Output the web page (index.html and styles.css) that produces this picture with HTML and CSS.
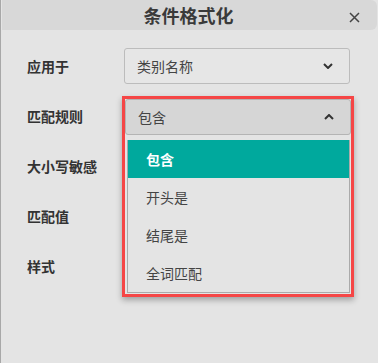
FILE: index.html
```html
<!DOCTYPE html>
<html lang="zh-CN">
<head>
  <meta charset="UTF-8">
  <title>条件格式化</title>
  <link rel="stylesheet" href="styles.css">
</head>
<body>
  <div class="dialog">
    <div class="header">
      <div class="title">条件格式化</div>
      <svg class="close" width="11" height="11" viewBox="0 0 11 11"><path d="M1 1 L10 10 M10 1 L1 10" stroke="#444" stroke-width="1.5"/></svg>
    </div>
    <div class="form">
      <div class="row">
        <div class="label">应用于</div>
        <div class="select">
          <span>类别名称</span>
          <svg class="chev" width="10" height="6" viewBox="0 0 10 6"><path d="M1 1 L5 5 L9 1" fill="none" stroke="#333" stroke-width="2"/></svg>
        </div>
      </div>
      <div class="row">
        <div class="label">匹配规则</div>
        <div class="highlight">
          <div class="select active">
            <span>包含</span>
            <svg class="chev" width="10" height="6" viewBox="0 0 10 6"><path d="M1 5 L5 1 L9 5" fill="none" stroke="#333" stroke-width="2"/></svg>
          </div>
          <ul class="options">
            <li class="selected">包含</li>
            <li>开头是</li>
            <li>结尾是</li>
            <li>全词匹配</li>
          </ul>
        </div>
      </div>
      <div class="row">
        <div class="label">大小写敏感</div>
      </div>
      <div class="row">
        <div class="label">匹配值</div>
      </div>
      <div class="row">
        <div class="label">样式</div>
      </div>
    </div>
  </div>
</body>
</html>
```
FILE: styles.css
```css
body {
  margin: 0;
  background: #e4e4e4;
  font-family: "Noto Sans CJK SC", "Noto Sans", sans-serif;
  color: #333;
}
.dialog {
  height: 363px;
  border-left: 1px solid #a8a8a8;
  box-sizing: border-box;
}
.header {
  position: relative;
  height: 30px;
  margin-left: 1px;
  width: 375px;
  background: #d8d8d8;
  border-radius: 0 6px 6px 0;
  display: flex;
  align-items: center;
  justify-content: center;
}
.title {
  font-size: 18px;
  font-weight: bold;
  color: #3a3a3a;
  margin-left: -2px;
}
.close {
  position: absolute;
  right: 17px;
  top: 12px;
}
.form {
  padding: 18px 0 0 26px;
  display: flex;
  flex-direction: column;
  gap: 14px;
}
.row {
  position: relative;
  height: 36px;
  display: flex;
  align-items: center;
}
.label {
  width: 97px;
  font-size: 14px;
  font-weight: bold;
  color: #333;
}
.select {
  width: 226px;
  height: 36px;
  box-sizing: border-box;
  border: 1px solid #bcbcbc;
  border-radius: 3px;
  background: #e6e6e6;
  display: flex;
  align-items: center;
  justify-content: space-between;
  padding: 0 16px 0 12px;
  font-size: 14px;
  color: #444;
}
.select.active {
  background: #d6d6d6;
  border-color: #b4b4b4;
}
.highlight {
  position: absolute;
  left: 95px;
  top: -2px;
  width: 226px;
  border: 3px solid #f54646;
  padding: 0 0 1px 0;
  box-shadow: 0 3px 6px rgba(0, 0, 0, 0.3);
  background: #e4e4e4;
}
.options {
  list-style: none;
  margin: 5px 1px 0 2px;
  padding: 0;
  border: 1px solid #aaa;
  border-top: none;
  background: #e4e4e4;
}
.options li {
  height: 38px;
  line-height: 38px;
  padding-left: 18px;
  font-size: 14px;
  color: #444;
}
.options li.selected {
  background: #00a99d;
  color: #fff;
  font-weight: bold;
}
```
